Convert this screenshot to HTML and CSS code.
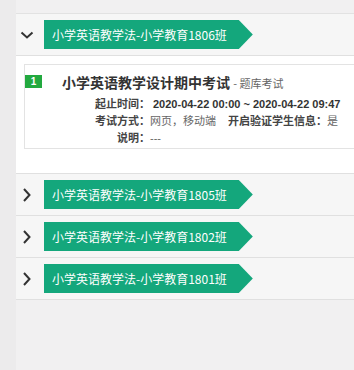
FILE: index.html
```html
<!DOCTYPE html>
<html lang="zh-CN">
<head>
    <meta charset="UTF-8">
    <meta name="viewport" content="width=device-width, initial-scale=1.0">
    <title>考试列表</title>
    <link rel="stylesheet" href="styles.css">
</head>
<body>
    <div class="side"></div>
    <div class="main">
        <div class="group">
            <div class="row open">
                <svg class="arrow" width="14" height="14" viewBox="0 0 14 14"><path d="M1.5 4.5 L7 9.5 L12.5 4.5" fill="none" stroke="#333" stroke-width="2"/></svg>
                <div class="tag">小学英语教学法-小学教育1806班</div>
            </div>
            <div class="content">
                <div class="card">
                    <div class="num">1</div>
                    <div class="info">
                        <div class="title">小学英语教学设计期中考试 <span class="type">- 题库考试</span></div>
                        <div class="line">
                            <span class="label">起止时间：</span>
                            <span class="val strong">2020-04-22 00:00 ~ 2020-04-22 09:47</span>
                        </div>
                        <div class="line">
                            <span class="label">考试方式：</span>
                            <span class="val">网页，移动端</span>
                            <span class="label2">开启验证学生信息：</span>
                            <span class="val">是</span>
                        </div>
                        <div class="line">
                            <span class="label">说明：</span>
                            <span class="val">---</span>
                        </div>
                    </div>
                </div>
            </div>
            <div class="row">
                <svg class="arrow" width="14" height="14" viewBox="0 0 14 14"><path d="M4 1 L9.5 7 L4 13" fill="none" stroke="#333" stroke-width="2"/></svg>
                <div class="tag">小学英语教学法-小学教育1805班</div>
            </div>
            <div class="row">
                <svg class="arrow" width="14" height="14" viewBox="0 0 14 14"><path d="M4 1 L9.5 7 L4 13" fill="none" stroke="#333" stroke-width="2"/></svg>
                <div class="tag">小学英语教学法-小学教育1802班</div>
            </div>
            <div class="row">
                <svg class="arrow" width="14" height="14" viewBox="0 0 14 14"><path d="M4 1 L9.5 7 L4 13" fill="none" stroke="#333" stroke-width="2"/></svg>
                <div class="tag">小学英语教学法-小学教育1801班</div>
            </div>
        </div>
    </div>
</body>
</html>
```
FILE: styles.css
```css
* {
    margin: 0;
    padding: 0;
    box-sizing: border-box;
}
body {
    display: flex;
    height: 100vh;
    overflow: hidden;
    background: #efeeef;
    font-family: "Liberation Sans", "Noto Sans CJK SC", sans-serif;
    color: #333;
}
.side {
    width: 16px;
    flex-shrink: 0;
    background: #ecebec;
}
.main {
    flex: 1;
    min-width: 0;
    padding-top: 13px;
    background: #f1f0f1;
}
.group {
    border-top: 1px solid #e2e2e2;
}
.row {
    display: flex;
    align-items: center;
    height: 42px;
    background: #f6f6f6;
    border-bottom: 1px solid #e0e0e0;
}
.arrow {
    margin-left: 4px;
    margin-right: 10px;
}
.tag {
    height: 29px;
    line-height: 29px;
    padding: 0 26px 0 8px;
    background: #14a77c;
    color: #fff;
    font-size: 12px;
    font-family: "Noto Sans CJK SC", sans-serif;
    clip-path: polygon(0 0, calc(100% - 14px) 0, 100% 50%, calc(100% - 14px) 100%, 0 100%);
}
.content {
    background: #fff;
    padding: 8px 0 24px 8px;
    border-bottom: 1px solid #e0e0e0;
}
.card {
    display: flex;
    height: 85px;
    border: 1px solid #e3e3e3;
    border-right: none;
}
.num {
    width: 17px;
    height: 13px;
    margin-top: 10px;
    background: #22a93f;
    color: #fff;
    font-size: 10px;
    font-weight: bold;
    line-height: 13px;
    text-align: center;
}
.info {
    margin-left: 20px;
    padding-top: 8px;
}
.title {
    font-size: 14px;
    font-weight: bold;
    line-height: 18px;
    margin-bottom: 4px;
    color: #333;
    font-family: "Noto Sans CJK SC", sans-serif;
}
.type {
    font-size: 11px;
    font-weight: normal;
    color: #666;
}
.line {
    display: flex;
    font-size: 12px;
    line-height: 17px;
    white-space: nowrap;
}
.label {
    width: 88px;
    text-align: right;
    font-weight: bold;
    color: #444;
    font-size: 11px;
}
.label2 {
    margin-left: 12px;
    font-weight: bold;
    color: #444;
    font-size: 11px;
}
.val {
    color: #666;
    font-size: 11px;
}
.val.strong {
    margin-left: 3px;
    color: #333;
    font-weight: bold;
    font-size: 11px;
}
```
